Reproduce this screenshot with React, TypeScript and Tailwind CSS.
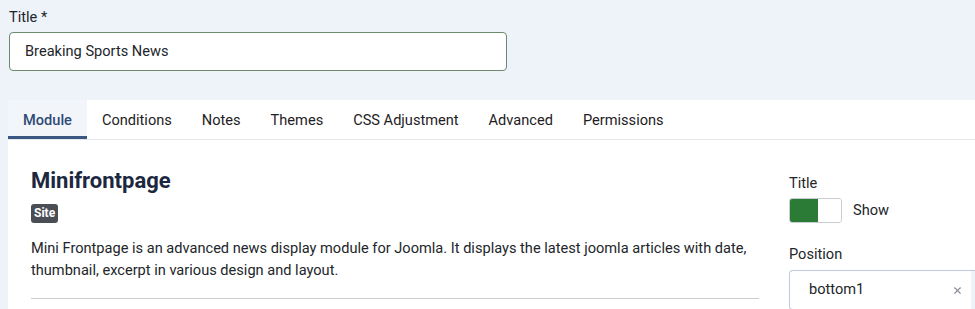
import { X } from "lucide-react";

const tabs = ["Module", "Conditions", "Notes", "Themes", "CSS Adjustment", "Advanced", "Permissions"];

export default function App() {
    return (
        <div className="h-[309px] w-[975px] overflow-hidden bg-[#eef3fa] font-['Roboto',sans-serif] text-[#22262a]">
            <div className="pl-[9px] pt-[7px]">
                <label className="block text-[14.6px] leading-[20px]">Title *</label>
                <div className="mt-[5px] flex h-[39px] w-[498px] items-center rounded-[4px] border border-[#6d8a6f] bg-white px-[15px] pt-[1px] text-[14.6px]">
                    Breaking Sports News
                </div>
            </div>

            <div className="ml-[8px] mt-[29px] bg-white">
                <div className="flex h-[40px] border-b border-[#e3e7ec]">
                    {tabs.map((t, i) => (
                        <div
                            key={t}
                            className={`flex items-center px-[15px] pt-[2px] text-[14.6px] ${
                                i === 0
                                    ? "border-b-[3px] border-[#3b5884] bg-[#f2f5f9] pt-[5px] font-medium text-[#2f4b78]"
                                    : "text-[#1e2124]"
                            }`}
                        >
                            {t}
                        </div>
                    ))}
                </div>

                <div className="flex gap-[30px] pl-[23px] pt-[28px]">
                    <div className="w-[728px] shrink-0">
                        <h2 className="text-[22px] font-bold leading-[26px] text-[#1b2840]">Minifrontpage</h2>
                        <div className="mt-[10px] flex">
                            <span className="rounded-[3px] bg-[#4a4e54] px-[3px] text-[12px] font-bold leading-[19px] text-white">
                                Site
                            </span>
                        </div>
                        <p className="mt-[14px] text-[14.6px] leading-[22px] text-[#22262a]">
                            Mini Frontpage is an advanced news display module for Joomla. It displays the latest joomla articles with date, thumbnail, excerpt in various design and layout.
                        </p>
                        <hr className="mt-[17px] border-t border-[#c9ccd0]" />
                    </div>

                    <div className="shrink-0 pt-[5px]">
                        <label className="block text-[14.6px] leading-[20px]">Title</label>
                        <div className="mt-[5px] flex items-center gap-[11px]">
                            <div className="flex h-[25px] w-[53px] overflow-hidden rounded-[3px] border border-[#c8cdd3]">
                                <div className="w-[28px] bg-[#2b7a36]" />
                                <div className="flex-1 bg-white" />
                            </div>
                            <span className="text-[14.6px]">Show</span>
                        </div>
                        <label className="mt-[21px] block text-[14.6px] leading-[20px]">Position</label>
                        <div className="mt-[6px] flex h-[40px] w-[200px] items-center rounded-l-[4px] border border-r-0 border-[#bfcbdc] bg-white pl-[19px] text-[14.6px]">
                            <span className="w-[143px]">bottom1</span>
                            <X className="size-[11px] text-[#8a8f95]" strokeWidth={2.5} />
                            <div className="ml-[8px] h-full w-[6px] bg-[#eef3fa]" />
                        </div>
                    </div>
                </div>
            </div>
        </div>
    );
}
